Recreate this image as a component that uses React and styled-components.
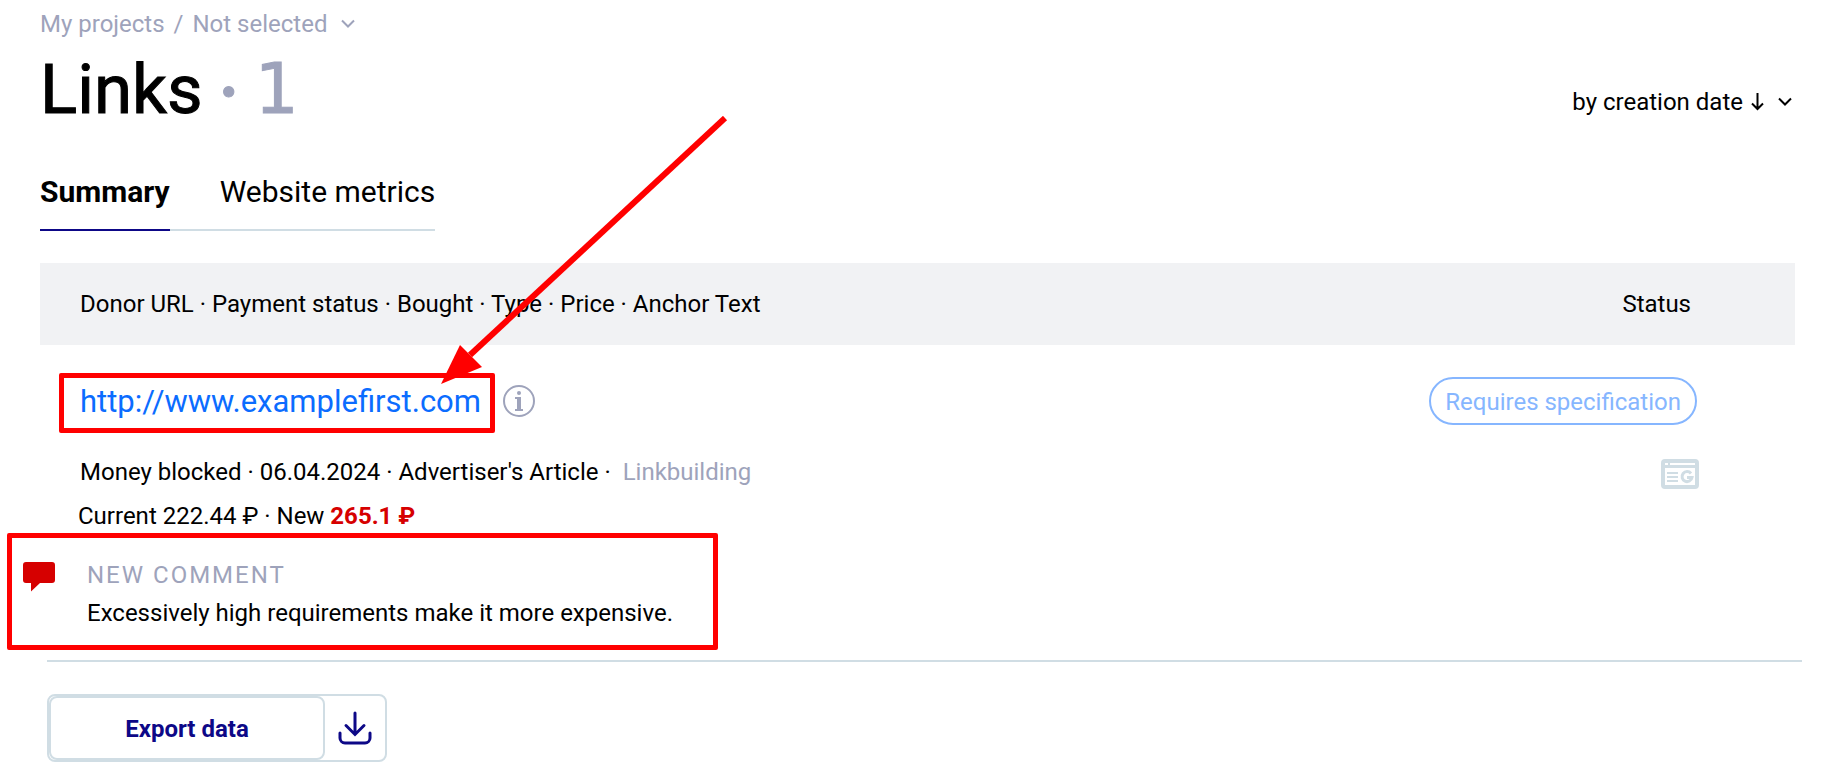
import React from 'react'
import styled, { createGlobalStyle } from 'styled-components'

const GlobalStyle = createGlobalStyle`
    * {
        box-sizing: border-box;
    }
    body {
        margin: 0;
        background-color: #fff;
        color: #000;
        font-family: Roboto, "Liberation Sans", sans-serif;
        font-size: 24px;
        line-height: 30px;
    }
    button {
        font: inherit;
        color: inherit;
        background: none;
        border: none;
        padding: 0;
        cursor: pointer;
    }
`
const Page = styled.main`
    padding: 9px 0 12px;
    overflow: hidden;
`
const Top = styled.header`
    display: flex;
    justify-content: space-between;
    padding: 0 32px 0 40px;
`
const Breadcrumbs = styled.nav`
    display: flex;
    align-items: center;
    gap: 9px;
    color: #9ea3bb;
`
const Crumb = styled.a`
    color: inherit;
    text-decoration: none;
`
const Picker = styled.button`
    display: flex;
    align-items: center;
    gap: 14px;
`
const SortLabel = styled.span`
    display: flex;
    align-items: center;
    gap: 8px;
`
const Title = styled.h1`
    margin: 8px 0 0;
    font-size: 69px;
    line-height: 80px;
    font-weight: 400;
    -webkit-text-stroke: 1px currentColor;
`
const Dot = styled.span`
    color: #9ea3bb;
    font-family: Lato, sans-serif;
`
const Count = styled.span`
    color: #9ea3bb;
    font-family: "DejaVu Sans", sans-serif;
`
const Sort = styled.div`
    display: flex;
    padding-top: 78px;
    align-items: flex-start;
`
const Tabs = styled.div`
    display: inline-flex;
    gap: 50px;
    margin: 38px 0 32px 40px;
    border-bottom: 2px solid #d0dde4;
`
const Tab = styled.button`
    && {
        font-size: 30px;
        line-height: 48px;
        font-weight: ${props => (props.$active ? 700 : 400)};
        padding-bottom: 13px;
        margin-bottom: -2px;
        border-bottom: 2px solid ${props => (props.$active ? '#0d0887' : 'transparent')};
    }
`
const TableWrap = styled.div`
    padding: 0 29px 0 40px;
`
const Table = styled.table`
    width: 100%;
    border-collapse: collapse;
`
const HeadCell = styled.th`
    height: 82px;
    padding: 0 ${props => (props.$end ? 104 : 0)}px 0 ${props => (props.$end ? 0 : 40)}px;
    background-color: #f1f2f4;
    font-weight: 400;
    text-align: ${props => (props.$end ? 'right' : 'left')};
`
const Cell = styled.td`
    padding: 32px 0 0 38px;
    vertical-align: top;
`
const StatusCell = styled(Cell)`
    padding-right: 96px;
`
const LinkRow = styled.div`
    display: flex;
    align-items: center;
    height: 48px;
    gap: 22px;
    padding-left: 2px;
`
const Marked = styled.span`
    position: relative;
    display: block;
    padding-top: 2px;

    &::after {
        content: "";
        position: absolute;
        inset: -10px -14px -14px -21px;
        border: 5px solid #f00;
        border-radius: 2px;
        pointer-events: none;
    }
`
const DonorLink = styled.a`
    color: #0b6cff;
    font-size: 31px;
    line-height: 34px;
    text-decoration: none;
`
const Pointer = styled.svg`
    position: absolute;
    right: -249px;
    bottom: 33px;
    z-index: 1;
    pointer-events: none;
`
const Meta = styled.div`
    padding-left: ${props => props.$indent || 0}px;
    margin-top: ${props => props.$gap}px;
`
const Muted = styled.span`
    color: #9ea3bb;
    margin-left: 6px;
`
const NewPrice = styled.strong`
    color: #d60000;
`
const StatusStack = styled.div`
    display: flex;
    flex-direction: column;
    align-items: flex-end;
    gap: 34px;
`
const Pill = styled.span`
    height: 48px;
    margin-right: 2px;
    padding: 0 14px;
    border: 2px solid #86b6ff;
    border-radius: 24px;
    color: #86b6ff;
    line-height: 46px;
    white-space: nowrap;
`
const Comment = styled.section`
    display: flex;
    width: fit-content;
    margin: 2px 0 0 7px;
    padding: 22px 40px 17px 11px;
    border: 5px solid #f00;
    border-radius: 2px;
    gap: 32px;
`
const CommentIcon = styled.svg`
    margin-top: 2px;
    flex: none;
`
const CommentTitle = styled.h2`
    margin: 0 0 8px;
    color: #9ea3bb;
    font-size: 24px;
    font-weight: 400;
    letter-spacing: 2px;
    text-transform: uppercase;
`
const Text = styled.p`
    margin: 0;
`
const Divider = styled.hr`
    height: 2px;
    margin: 10px 22px 32px 47px;
    border: none;
    background-color: #d0dde4;
`
const Export = styled.div`
    display: inline-flex;
    align-items: center;
    height: 68px;
    margin-left: 47px;
    border: 2px solid #d0dde4;
    border-radius: 8px;
    color: #0d0887;
`
const ExportButton = styled.button`
    && {
        width: 276px;
        height: 64px;
        padding-top: 2px;
        border: 2px solid #d0dde4;
        border-radius: 8px;
        font-weight: 700;
    }
`
const DownloadButton = styled.button`
    display: flex;
    justify-content: center;
    width: 60px;
`

const Chevron = () => (
    <svg width="14" height="10" viewBox="0 0 14 10" fill="none" stroke="currentColor" strokeWidth="2">
        <path d="M1 1.5 7 7.5 13 1.5" />
    </svg>
)

const columns = ['Donor URL', 'Payment status', 'Bought', 'Type', 'Price', 'Anchor Text']

const App = () => {
    return (
        <>
            <GlobalStyle />
            <Page>
                <Top>
                    <div>
                        <Breadcrumbs>
                            <Crumb href="#projects">My projects</Crumb>
                            <span>/</span>
                            <Picker>Not selected <Chevron /></Picker>
                        </Breadcrumbs>
                        <Title>Links <Dot>·</Dot> <Count>1</Count></Title>
                    </div>
                    <Sort>
                        <Picker>
                            <SortLabel>
                                by creation date
                                <svg width="13" height="18" viewBox="0 0 13 18" fill="none" stroke="currentColor" strokeWidth="2">
                                    <path d="M6.5 0V16M1 10.5 6.5 16 12 10.5" />
                                </svg>
                            </SortLabel>
                            <Chevron />
                        </Picker>
                    </Sort>
                </Top>
                <Tabs role="tablist">
                    <Tab role="tab" aria-selected="true" $active>Summary</Tab>
                    <Tab role="tab" aria-selected="false">Website metrics</Tab>
                </Tabs>
                <TableWrap>
                    <Table>
                        <thead>
                            <tr>
                                <HeadCell>{columns.join(' · ')}</HeadCell>
                                <HeadCell $end>Status</HeadCell>
                            </tr>
                        </thead>
                        <tbody>
                            <tr>
                                <Cell>
                                    <LinkRow>
                                        <Marked>
                                            <DonorLink href="http://www.examplefirst.com">http://www.examplefirst.com</DonorLink>
                                            <Pointer width="290" height="270" viewBox="0 0 290 270">
                                                <path d="M285 2 30 239" stroke="#f00" strokeWidth="6" />
                                                <path d="M1 268 20 229 42 251Z" fill="#f00" />
                                            </Pointer>
                                        </Marked>
                                        <svg width="32" height="32" viewBox="0 0 32 32" fill="#9ea3bb">
                                            <circle cx="16" cy="16" r="15" fill="none" stroke="#9ea3bb" strokeWidth="2" />
                                            <circle cx="16" cy="8" r="2" />
                                            <path d="M12 12H18V24H20V26H12V24H14V14H12Z" />
                                        </svg>
                                    </LinkRow>
                                    <Meta $gap={32} $indent={2}>
                                        Money blocked · 06.04.2024 · Advertiser's Article · <Muted>Linkbuilding</Muted>
                                    </Meta>
                                    <Meta $gap={14}>
                                        Current 222.44 ₽ · New <NewPrice>265.1 ₽</NewPrice>
                                    </Meta>
                                </Cell>
                                <StatusCell>
                                    <StatusStack>
                                        <Pill>Requires specification</Pill>
                                        <svg width="38" height="30" viewBox="0 0 38 30" fill="none" stroke="#d0dde4">
                                            <rect x="2" y="2" width="34" height="26" rx="2" strokeWidth="4" />
                                            <path d="M2 2.5H36M2 7.5H36" strokeWidth="3" />
                                            <path d="M2 4.5H4M7 4.5H9M34 4.5H36" strokeWidth="3" />
                                            <path d="M6 14H17M6 18H17M6 22H17" strokeWidth="2" />
                                            <path d="M30 14.5A5 5 0 1 0 31 18.5H26" strokeWidth="3" />
                                        </svg>
                                    </StatusStack>
                                </StatusCell>
                            </tr>
                        </tbody>
                    </Table>
                </TableWrap>
                <Comment>
                    <CommentIcon width="32" height="30" viewBox="0 0 32 30" fill="#d60000">
                        <path d="M3 0H29A3 3 0 0 1 32 3V18A3 3 0 0 1 29 21H17L8 29.5V21H3A3 3 0 0 1 0 18V3A3 3 0 0 1 3 0Z" />
                    </CommentIcon>
                    <div>
                        <CommentTitle>New comment</CommentTitle>
                        <Text>Excessively high requirements make it more expensive.</Text>
                    </div>
                </Comment>
                <Divider />
                <Export>
                    <ExportButton>Export data</ExportButton>
                    <DownloadButton aria-label="Download">
                        <svg width="34" height="34" viewBox="0 0 34 34" fill="none" stroke="currentColor" strokeWidth="3" strokeLinecap="round">
                            <path d="M17 2V23M8 14.5 17 23.5 26 14.5M2 22V27A5 5 0 0 0 7 32H27A5 5 0 0 0 32 27V22" />
                        </svg>
                    </DownloadButton>
                </Export>
            </Page>
        </>
    )
}

export default App
